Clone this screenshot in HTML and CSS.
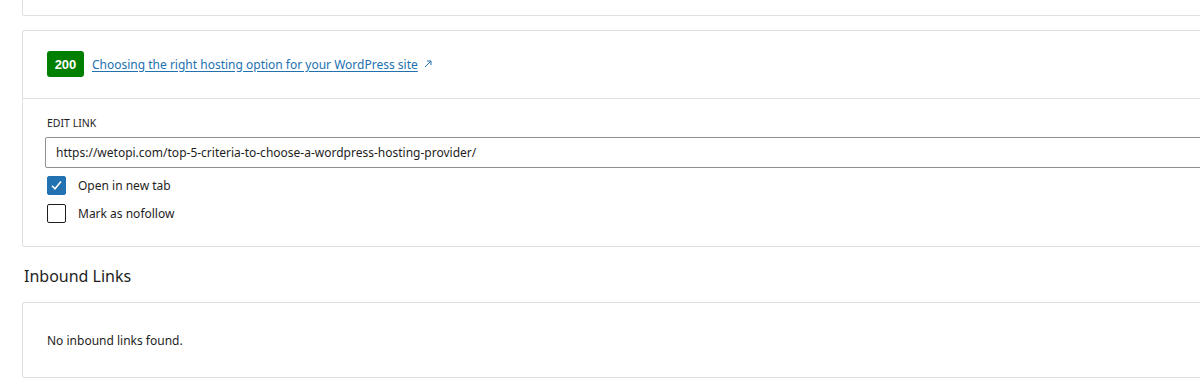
FILE: index.html
```html
<!DOCTYPE html>
<html>
<head>
<meta charset="utf-8">
<link rel="stylesheet" href="styles.css">
</head>
<body>
<div class="page">
  <div class="card card-top"></div>

  <div class="card">
    <div class="card-head">
      <span class="badge">200</span>
      <a class="link" href="#">Choosing the right hosting option for your WordPress site</a>
      <svg class="ext" width="8" height="8" viewBox="0 0 8 8"><path d="M1 7 L7 1 M3 1 H7 V5" fill="none" stroke="#2271b1" stroke-width="1"/></svg>
    </div>
    <div class="card-body">
      <div class="label">EDIT LINK</div>
      <div class="input">https://wetopi.com/top-5-criteria-to-choose-a-wordpress-hosting-provider/</div>
      <div class="check-row">
        <span class="box checked"><svg width="19" height="19" viewBox="0 0 19 19"><path d="M5 9.8 L8 12.8 L14 5.5" fill="none" stroke="#fff" stroke-width="1.6"/></svg></span>
        <span class="check-label">Open in new tab</span>
      </div>
      <div class="check-row">
        <span class="box"></span>
        <span class="check-label">Mark as nofollow</span>
      </div>
    </div>
  </div>

  <h2 class="heading">Inbound Links</h2>

  <div class="card">
    <div class="empty">No inbound links found.</div>
  </div>
</div>
</body>
</html>
```
FILE: styles.css
```css
html, body {
  margin: 0;
  padding: 0;
  background: #fff;
  overflow: hidden;
}
body {
  font-family: "Noto Sans", "Open Sans", sans-serif;
  font-size: 12px;
  color: #1e1e1e;
}
.page {
  padding-left: 22px;
  width: 1400px;
}
.card {
  border: 1px solid #e0e0e0;
  border-radius: 2px;
  background: #fff;
}
.card-top {
  margin-top: -20px;
  height: 34px;
  margin-bottom: 14px;
}
.card-head {
  display: flex;
  align-items: center;
  height: 26px;
  padding: 20px 24px 21px 24px;
  border-bottom: 1px solid #e0e0e0;
}
.badge {
  display: inline-flex;
  align-items: center;
  justify-content: center;
  width: 37px;
  height: 26px;
  background: #007f00;
  color: #fff;
  font-weight: 700;
  font-size: 13px;
  border-radius: 3px;
  font-family: "Liberation Sans", Arial, sans-serif;
}
.link {
  margin-left: 8px;
  color: #2271b1;
  text-decoration: underline;
  text-underline-offset: 2px;
}
.ext {
  margin-left: 6px;
}
.card-body {
  padding: 16px 24px 23px 22px;
}
.label {
  font-size: 10.5px;
  line-height: 16px;
  height: 16px;
  text-transform: uppercase;
  margin-bottom: 6px;
  margin-left: 2px;
  color: #1e1e1e;
}
.input {
  height: 31px;
  box-sizing: border-box;
  border: 1px solid #8c8f94;
  border-radius: 2px;
  padding: 0 10px;
  display: flex;
  align-items: center;
  color: #1e1e1e;
}
.check-row {
  display: flex;
  align-items: center;
  height: 19px;
  margin-top: 8px;
  margin-left: 2px;
}
.check-row + .check-row {
  margin-top: 9px;
}
.box {
  width: 19px;
  height: 19px;
  box-sizing: border-box;
  border: 1px solid #1e1e1e;
  border-radius: 2px;
  display: inline-block;
}
.box.checked {
  background: #2271b1;
  border-color: #2271b1;
}
.box svg {
  display: block;
  margin: -1px;
}
.check-label {
  margin-left: 12px;
  color: #1e1e1e;
}
.heading {
  font-size: 16px;
  font-weight: 400;
  line-height: 24px;
  height: 24px;
  margin: 17px 0 14px 2px;
  color: #1e1e1e;
}
.empty {
  padding: 28px 24px 26px 24px;
  line-height: 20px;
}
```
